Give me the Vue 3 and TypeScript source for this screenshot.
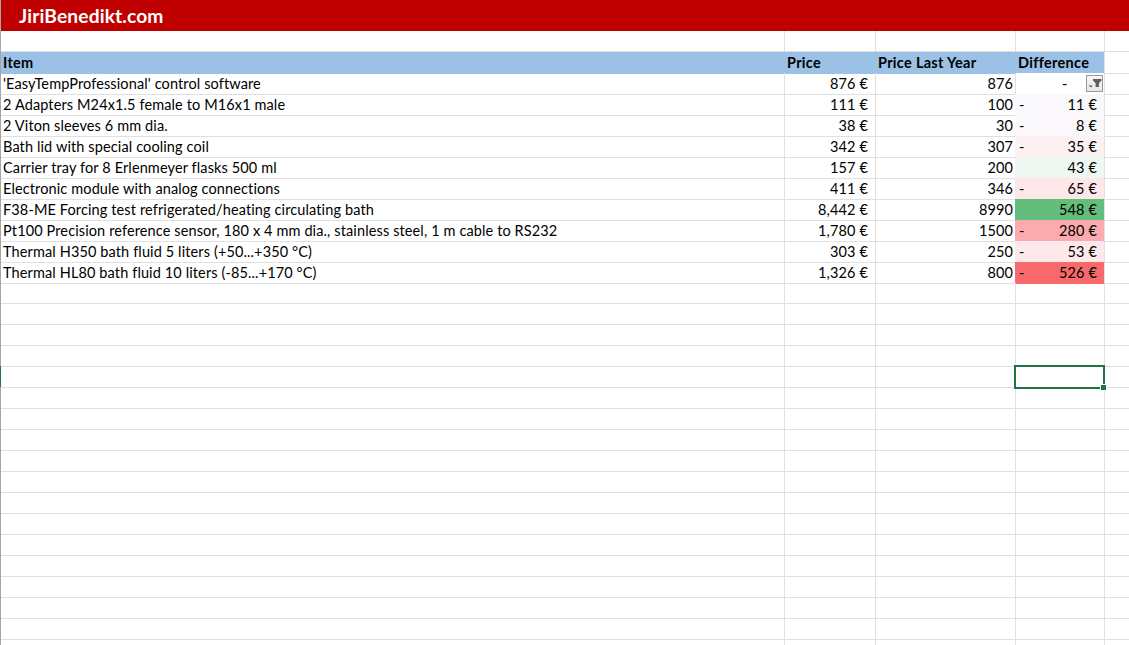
<script setup lang="ts">
interface Row {
  item: string
  price: string
  last: string
  diff: string
  minus: boolean
  bg: string
}

const rows: Row[] = [
  { item: "'EasyTempProfessional' control software", price: '876 €', last: '876', diff: '-', minus: false, bg: '#ffffff' },
  { item: '2 Adapters M24x1.5 female to M16x1 male', price: '111 €', last: '100', diff: '11 €', minus: true, bg: '#fbf8fb' },
  { item: '2 Viton sleeves 6 mm dia.', price: '38 €', last: '30', diff: '8 €', minus: true, bg: '#fbf8fb' },
  { item: 'Bath lid with special cooling coil', price: '342 €', last: '307', diff: '35 €', minus: true, bg: '#fcf1f3' },
  { item: 'Carrier tray for 8 Erlenmeyer flasks 500 ml', price: '157 €', last: '200', diff: '43 €', minus: false, bg: '#eff7f3' },
  { item: 'Electronic module with analog connections', price: '411 €', last: '346', diff: '65 €', minus: true, bg: '#fde7e9' },
  { item: 'F38-ME Forcing test refrigerated/heating circulating bath', price: '8,442 €', last: '8990', diff: '548 €', minus: false, bg: '#63be7b' },
  { item: 'Pt100 Precision reference sensor, 180 x 4 mm dia., stainless steel, 1 m cable to RS232', price: '1,780 €', last: '1500', diff: '280 €', minus: true, bg: '#fbaaad' },
  { item: 'Thermal H350 bath fluid 5 liters (+50...+350 °C)', price: '303 €', last: '250', diff: '53 €', minus: true, bg: '#fde9ec' },
  { item: 'Thermal HL80 bath fluid 10 liters (-85...+170 °C)', price: '1,326 €', last: '800', diff: '526 €', minus: true, bg: '#f8696b' }
]

// blank sheet rows below the table, down to the window edge
const emptyRows = Array.from({ length: 18 }, (_, i) => i)
</script>

<template>
  <div class="sheet">
    <div class="gutter"></div>
    <div class="page">
      <div class="title-bar">JiriBenedikt.com</div>

      <div class="row spacer">
        <div class="cell"></div>
        <div class="cell"></div>
        <div class="cell"></div>
        <div class="cell"></div>
        <div class="cell rest"></div>
      </div>

      <div class="row head">
        <div class="cell">Item</div>
        <div class="cell">Price</div>
        <div class="cell">Price Last Year</div>
        <div class="cell">Difference</div>
        <div class="cell rest"></div>
      </div>

      <div v-for="r in rows" :key="r.item" class="row">
        <div class="cell">{{ r.item }}</div>
        <div class="cell price">{{ r.price }}</div>
        <div class="cell last">{{ r.last }}</div>
        <div class="cell diff" :class="{ dash: r.diff === '-' }" :style="{ backgroundColor: r.bg }">
          <span v-if="r.minus">-</span>
          <span v-else></span>
          <span>{{ r.diff }}</span>
        </div>
        <div class="cell rest"></div>
      </div>

      <div v-for="n in emptyRows" :key="n" class="row">
        <div class="cell"></div>
        <div class="cell"></div>
        <div class="cell"></div>
        <div class="cell"></div>
        <div class="cell rest"></div>
      </div>
    </div>

    <!-- filter button on the first Difference cell -->
    <div class="filter-btn">
      <svg width="15" height="15" viewBox="0 0 15 15">
        <path d="M6 3h8.5v1.5l-2.6 2.7V11H8.6V7.2L6 4.5z" fill="#5f5f5f" />
        <path d="M1.5 9.5h4.5l-2.2 2z" fill="#5f5f5f" />
      </svg>
    </div>

    <!-- active cell -->
    <div class="selection"><span class="handle"></span></div>
    <div class="row-mark"></div>
  </div>
</template>

<style>
html,
body {
  margin: 0;
  background: #fff;
}
</style>

<style scoped>
.sheet {
  position: relative;
  display: flex;
  width: 1129px;
  height: 645px;
  overflow: hidden;
  background: #fff;
  color: #000;
  font-family: Lato, "Liberation Sans", sans-serif;
  font-size: 14.5px;
  letter-spacing: 0.12px;
}
.gutter {
  flex: none;
  width: 1px;
  background: #a6a6a6;
}
.page {
  flex: 1;
  min-width: 0;
}
.title-bar {
  height: 31px;
  box-sizing: border-box;
  padding-left: 18px;
  background: #c00000;
  color: #fff;
  font-size: 19.2px;
  font-weight: 700;
  line-height: 32px;
}
.row {
  display: grid;
  grid-template-columns: 784px 91px 140px 89px 1fr;
  height: 21px;
  line-height: 21px;
}
.cell {
  box-sizing: border-box;
  min-width: 0;
  padding: 0 2px;
  border-right: 1px solid #e0e0e0;
  border-bottom: 1px solid #e0e0e0;
  white-space: nowrap;
}
.rest {
  border-right: 0;
}
.head .cell {
  background: #9bc2e6;
  background-clip: padding-box;
  border-bottom-color: #9bc2e6;
  border-right-color: #9bc2e6;
  font-weight: 700;
  letter-spacing: 0.3px;
}
.head .cell:nth-child(4) {
  border-right-color: #e0e0e0;
}
.head .rest {
  background: #fff;
  border-bottom-color: #e0e0e0;
}
.price {
  padding-right: 7px;
  text-align: right;
}
.last {
  text-align: right;
}
.diff {
  display: flex;
  justify-content: space-between;
  margin-left: -1px;
  padding: 0 7px 0 4px;
  border-bottom-color: transparent;
}
.diff.dash {
  justify-content: flex-start;
  margin-left: 0;
  padding-left: 46px;
  border-bottom-color: #e0e0e0;
}
.filter-btn {
  position: absolute;
  left: 1086px;
  top: 75px;
  display: flex;
  align-items: center;
  justify-content: center;
  box-sizing: border-box;
  width: 17px;
  height: 17px;
  background: linear-gradient(#f7f7f7, #e8e8e8);
  border: 1px solid #9a9a9a;
}
.selection {
  position: absolute;
  left: 1014px;
  top: 365px;
  box-sizing: border-box;
  width: 91px;
  height: 24px;
  border: 2px solid #217346;
}
.handle {
  position: absolute;
  right: -3px;
  bottom: -3px;
  width: 5px;
  height: 5px;
  background: #217346;
  outline: 1px solid #fff;
}
.row-mark {
  position: absolute;
  left: 0;
  top: 366px;
  width: 1px;
  height: 21px;
  background: #217346;
}
</style>
